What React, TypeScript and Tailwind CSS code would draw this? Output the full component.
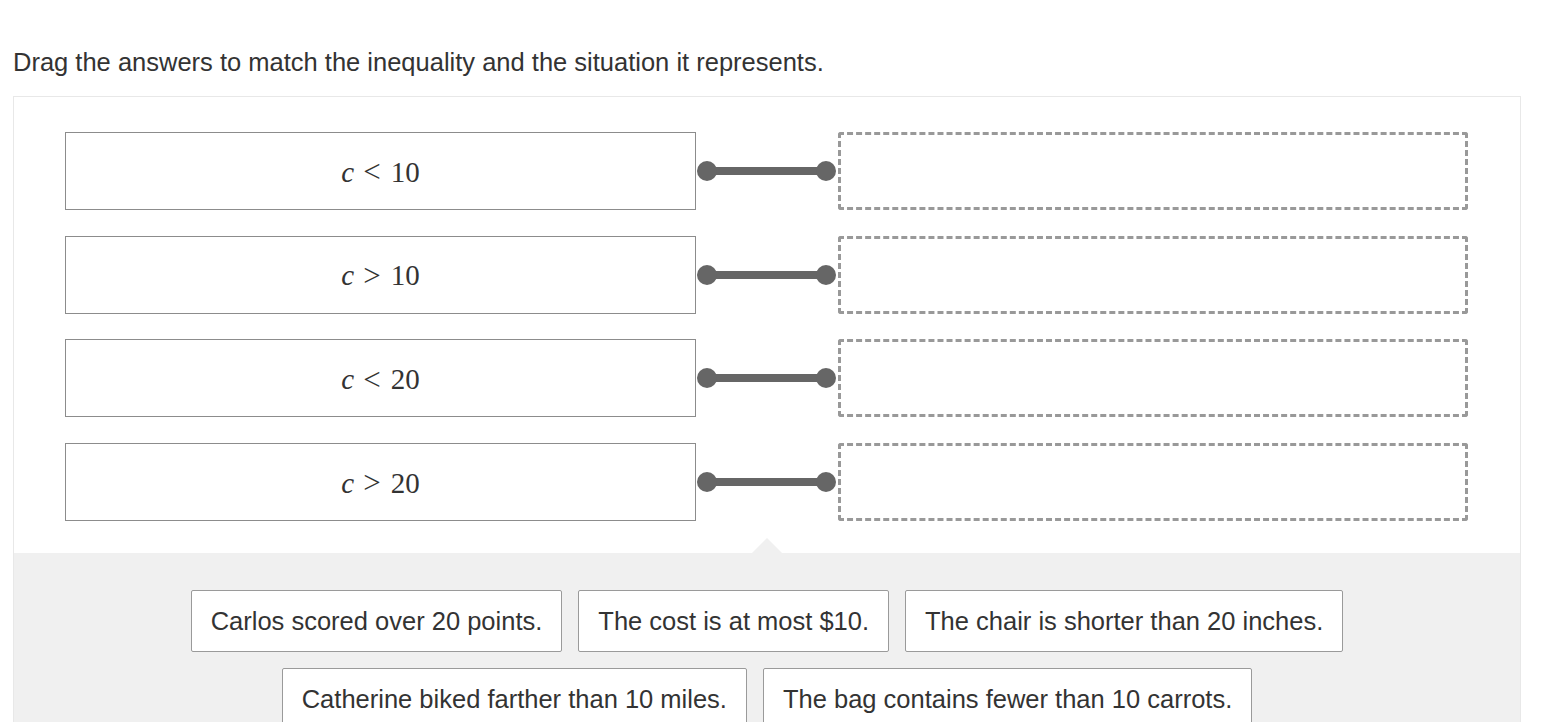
import React from "react";

const rows = [
  { op: "<", n: "10" },
  { op: ">", n: "10" },
  { op: "<", n: "20" },
  { op: ">", n: "20" },
];

const chips1 = [
  "Carlos scored over 20 points.",
  "The cost is at most $10.",
  "The chair is shorter than 20 inches.",
];
const chips2 = [
  "Catherine biked farther than 10 miles.",
  "The bag contains fewer than 10 carrots.",
];

function Connector() {
  return (
    <svg width="142" height="24" viewBox="0 0 142 24" className="block">
      <line x1="11" y1="12" x2="130" y2="12" stroke="#666666" strokeWidth="8" />
      <circle cx="11" cy="12" r="10" fill="#666666" />
      <circle cx="130" cy="12" r="10" fill="#666666" />
    </svg>
  );
}

function Chip({ text }: { text: string }) {
  return (
    <div className="h-[62px] px-[19px] flex items-center bg-white border border-[#9a9a9a] rounded-[2px] text-[25.5px] text-[#333333] whitespace-nowrap">
      {text}
    </div>
  );
}

export default function App() {
  return (
    <div className="w-[1554px] h-[722px] overflow-hidden bg-white font-['Liberation_Sans',Arial,sans-serif] text-[#333333]">
      <div className="pt-[46px] pl-[13px] text-[25.5px] leading-[32px]">
        Drag the answers to match the inequality and the situation it represents.
      </div>
      <div className="mt-[18px] ml-[13px] w-[1508px] border border-[#e8e8e8]">
        <div className="px-[51px] pt-[35px] pb-[32px] flex flex-col gap-[25.7px]">
          {rows.map((r, i) => (
            <div key={i} className="grid grid-cols-[631px_142px_630px] items-center">
              <div className="h-[78px] pt-[3px] border border-[#8c8c8c] flex items-center justify-center font-['Liberation_Serif','DejaVu_Serif',serif] text-[29px] text-[#333333]">
                <span className="italic">c</span>
                <span className="ml-[9px] mr-[10px] text-[31px] font-light">{r.op}</span>
                <span>{r.n}</span>
              </div>
              <div className="flex justify-center">
                <Connector />
              </div>
              <div className="h-[78px] border-[3px] border-dashed border-[#999999] rounded-[3px]" />
            </div>
          ))}
        </div>
        <div className="relative bg-[#f0f0f0] pt-[37px] pb-[40px] flex flex-col items-center gap-[16px]">
          <div className="absolute left-[738px] -top-[15px] w-0 h-0 border-l-[15px] border-r-[15px] border-b-[15px] border-l-transparent border-r-transparent border-b-[#f0f0f0]" />
          <div className="flex gap-[16px]">
            {chips1.map((c) => (
              <Chip key={c} text={c} />
            ))}
          </div>
          <div className="flex gap-[16px]">
            {chips2.map((c) => (
              <Chip key={c} text={c} />
            ))}
          </div>
        </div>
      </div>
    </div>
  );
}
